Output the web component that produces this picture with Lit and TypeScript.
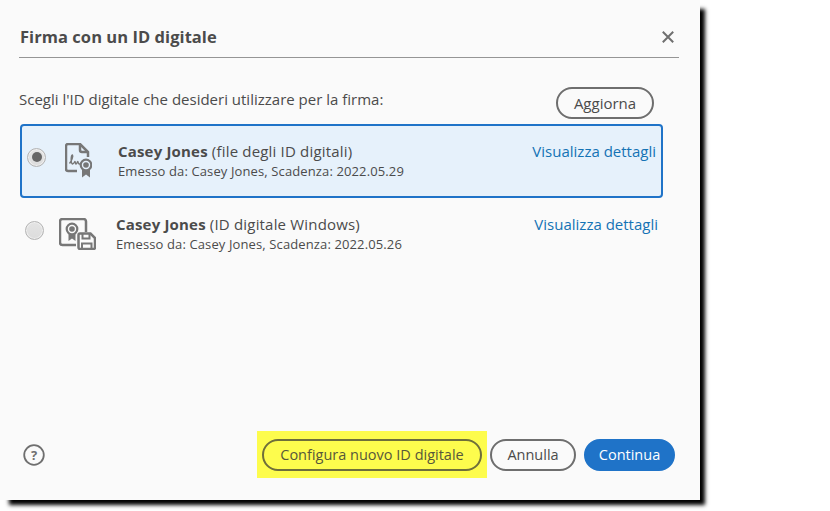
import { LitElement, html, css, svg } from "lit";
import { customElement } from "lit/decorators.js";

const certDoc = svg`<svg class="icon" width="27" height="35" viewBox="0 0 27 35" fill="none" stroke="#777" stroke-width="2.500">
  <path d="M12 28H3a2 2 0 0 1-2-2V3a2 2 0 0 1 2-2H15L23 9V14"/>
  <path d="M15 1V7a2 2 0 0 0 2 2H23"/>
  <path stroke-width="1.400" d="M4.500 20.500C6.500 18 8.500 13 7.500 12C6 11.500 5.500 20 7.500 21C9 21 9.500 18.500 10 18.500C10.500 18.500 10 21 11 21C12 21 12 18.500 12.800 18.500C13.300 18.500 13 21 14 21H15.500"/>
  <path fill="#777" stroke="none" d="M17 25V34.500L21 31.500L25 34.500V25Z"/>
  <circle cx="21" cy="22" r="5.300" fill="#e6f1fb" stroke-width="2.200"/>
  <circle cx="21" cy="22" r="2.800" fill="#777" stroke="none"/>
</svg>`;

const certSave = svg`<svg class="icon" width="37" height="32" viewBox="0 0 37 32" fill="none" stroke="#777" stroke-width="2.500">
  <path d="M17 27H3.500A2.500 2.500 0 0 1 1 24.500V3.500A2.500 2.500 0 0 1 3.500 1H24.500A2.500 2.500 0 0 1 27 3.500V14"/>
  <circle cx="13" cy="11" r="5.300" stroke-width="2.200"/>
  <circle cx="13" cy="11" r="2.800" fill="#777" stroke="none"/>
  <path fill="#777" stroke="none" d="M9.500 16V23L13 20.500L16.500 23V16Z"/>
  <path fill="#fafafa" d="M19.500 17a1.500 1.500 0 0 1 1.500-1.500H31.500L36 20V29.500a1.500 1.500 0 0 1-1.500 1.500H21a1.500 1.500 0 0 1-1.500-1.500Z"/>
  <path stroke-width="2" d="M23.500 16V20.500H30.500V16M23 31V25.500H32.500V31"/>
</svg>`;

@customElement("app-root")
export class AppRoot extends LitElement {
  static styles = css`
    :host {
      display: block;
      width: 830px;
      height: 511px;
      background: #fff;
      font-family: "Open Sans", "Noto Sans", sans-serif;
      color: #4b4b4b;
      overflow: hidden;
    }
    .dialog {
      width: 700px;
      height: 500px;
      box-sizing: border-box;
      background: #fafafa;
      box-shadow: 7px 7px 4px -2px #000;
      display: flex;
      flex-direction: column;
      padding: 0 21px 22px 19px;
    }
    .header {
      border-bottom: 1px solid #959595;
      display: flex;
      align-items: center;
      justify-content: space-between;
      padding: 23px 5px 0 1px;
      flex: none;
      height: 34px;
    }
    .title { font-size: 16.500px; font-weight: 700; letter-spacing: 0.05px; margin-top: -7px; }
    .close { display: block; margin-top: -6px; }
    .prompt-row {
      display: flex;
      align-items: center;
      justify-content: space-between;
      margin-top: 29px;
      padding-right: 25px;
      height: 32px;
    }
    .prompt { font-size: 15px; margin-top: -9px; }
    .btn {
      box-sizing: border-box;
      height: 32px;
      border-radius: 16px;
      border: 2px solid #6e6e6e;
      background: transparent;
      display: flex;
      align-items: center;
      justify-content: center;
      font-family: inherit;
      font-size: 14.500px;
      color: #4b4b4b;
      padding: 0;
    }
    .refresh { width: 98px; font-size: 15px; }
    .list { display: flex; flex-direction: column; margin-top: 5px; flex: 1; }
    .row {
      display: flex;
      align-items: center;
      height: 74px;
      box-sizing: border-box;
    }
    .row.selected {
      margin-left: 1px;
      width: 643px;
      background: #e6f1fb;
      border: 2px solid #1f73c8;
      border-radius: 4px;
      padding: 0 5px 6px 5px;
    }
    .row.other {
      margin-left: 6px;
      width: 633px;
      height: 66px;
    }
    .radio {
      box-sizing: border-box;
      flex: none;
      width: 19px;
      height: 19px;
      margin-top: -2px;
      border-radius: 50%;
      border: 1px solid #b4b4b4;
      background: linear-gradient(#e4e4e4, #dcdcdc);
      display: flex;
      align-items: center;
      justify-content: center;
      box-shadow: inset 0 0 0 1px #efefef;
    }
    .dot { width: 10px; height: 10px; border-radius: 50%; background: #666; }
    .slot { flex: none; display: flex; justify-content: center; align-items: center; }
    .selected .slot { width: 64px; margin-top: 4px; }
    .other .slot { width: 67px; margin-top: 6px; }
    .icon { display: block; }
    .text { flex: 1; min-width: 0; padding-top: 6px; }
    .selected .text { margin-left: 8px; }
    .other .text { margin-left: 5px; }
    .name { font-size: 15px; letter-spacing: 0.18px; line-height: 20px; }
    .name b { font-weight: 700; }
    .meta { font-size: 13px; letter-spacing: 0.12px; line-height: 20px; }
    .link { font-size: 15px; color: #1473b5; margin-top: -15px; }
    .footer { display: flex; align-items: center; height: 47px; flex: none; margin-right: 4px; }
    .help { display: block; margin-left: 4px; margin-right: auto; }
    .mark {
      background: #fdfc4d;
      width: 230px;
      height: 47px;
      display: flex;
      align-items: center;
      justify-content: center;
    }
    .configure { width: 220px; color: #57573a; border-color: #6f6f3a; }
    .cancel { width: 86px; margin-left: 3px; }
    .go {
      width: 91px;
      margin-left: 8px;
      background: #1f73c8;
      border-color: #1f73c8;
      color: #fff;
    }
  `;

  private row(selected: boolean, icon: unknown, type: string, date: string) {
    return html`<div class="row ${selected ? "selected" : "other"}">
      <span class="radio">${selected ? html`<span class="dot"></span>` : ""}</span>
      <span class="slot">${icon}</span>
      <div class="text">
        <div class="name"><b>Casey Jones</b> (${type})</div>
        <div class="meta">Emesso da: Casey Jones, Scadenza: ${date}</div>
      </div>
      <span class="link">Visualizza dettagli</span>
    </div>`;
  }

  render() {
    return html`<div class="dialog">
      <div class="header">
        <span class="title">Firma con un ID digitale</span>
        <svg class="close" width="12" height="12" viewBox="0 0 12 12" stroke="#6f6f6f" stroke-width="2" fill="none"><path d="M.8.8 11.200 11.200M11.200.8.8 11.200"/></svg>
      </div>
      <div class="prompt-row">
        <span class="prompt">Scegli l'ID digitale che desideri utilizzare per la firma:</span>
        <button class="btn refresh">Aggiorna</button>
      </div>
      <div class="list">
        ${this.row(true, certDoc, "file degli ID digitali", "2022.05.29")}
        ${this.row(false, certSave, "ID digitale Windows", "2022.05.26")}
      </div>
      <div class="footer">
        <svg class="help" width="22" height="22" viewBox="0 0 22 22" fill="none">
          <circle cx="11" cy="11" r="9.800" stroke="#6f6f6f" stroke-width="1.800"/>
          <text x="11" y="15.500" text-anchor="middle" font-size="13" font-weight="700" fill="#6f6f6f" font-family="Open Sans, sans-serif">?</text>
        </svg>
        <div class="mark"><button class="btn configure">Configura nuovo ID digitale</button></div>
        <button class="btn cancel">Annulla</button>
        <button class="btn go">Continua</button>
      </div>
    </div>`;
  }
}
